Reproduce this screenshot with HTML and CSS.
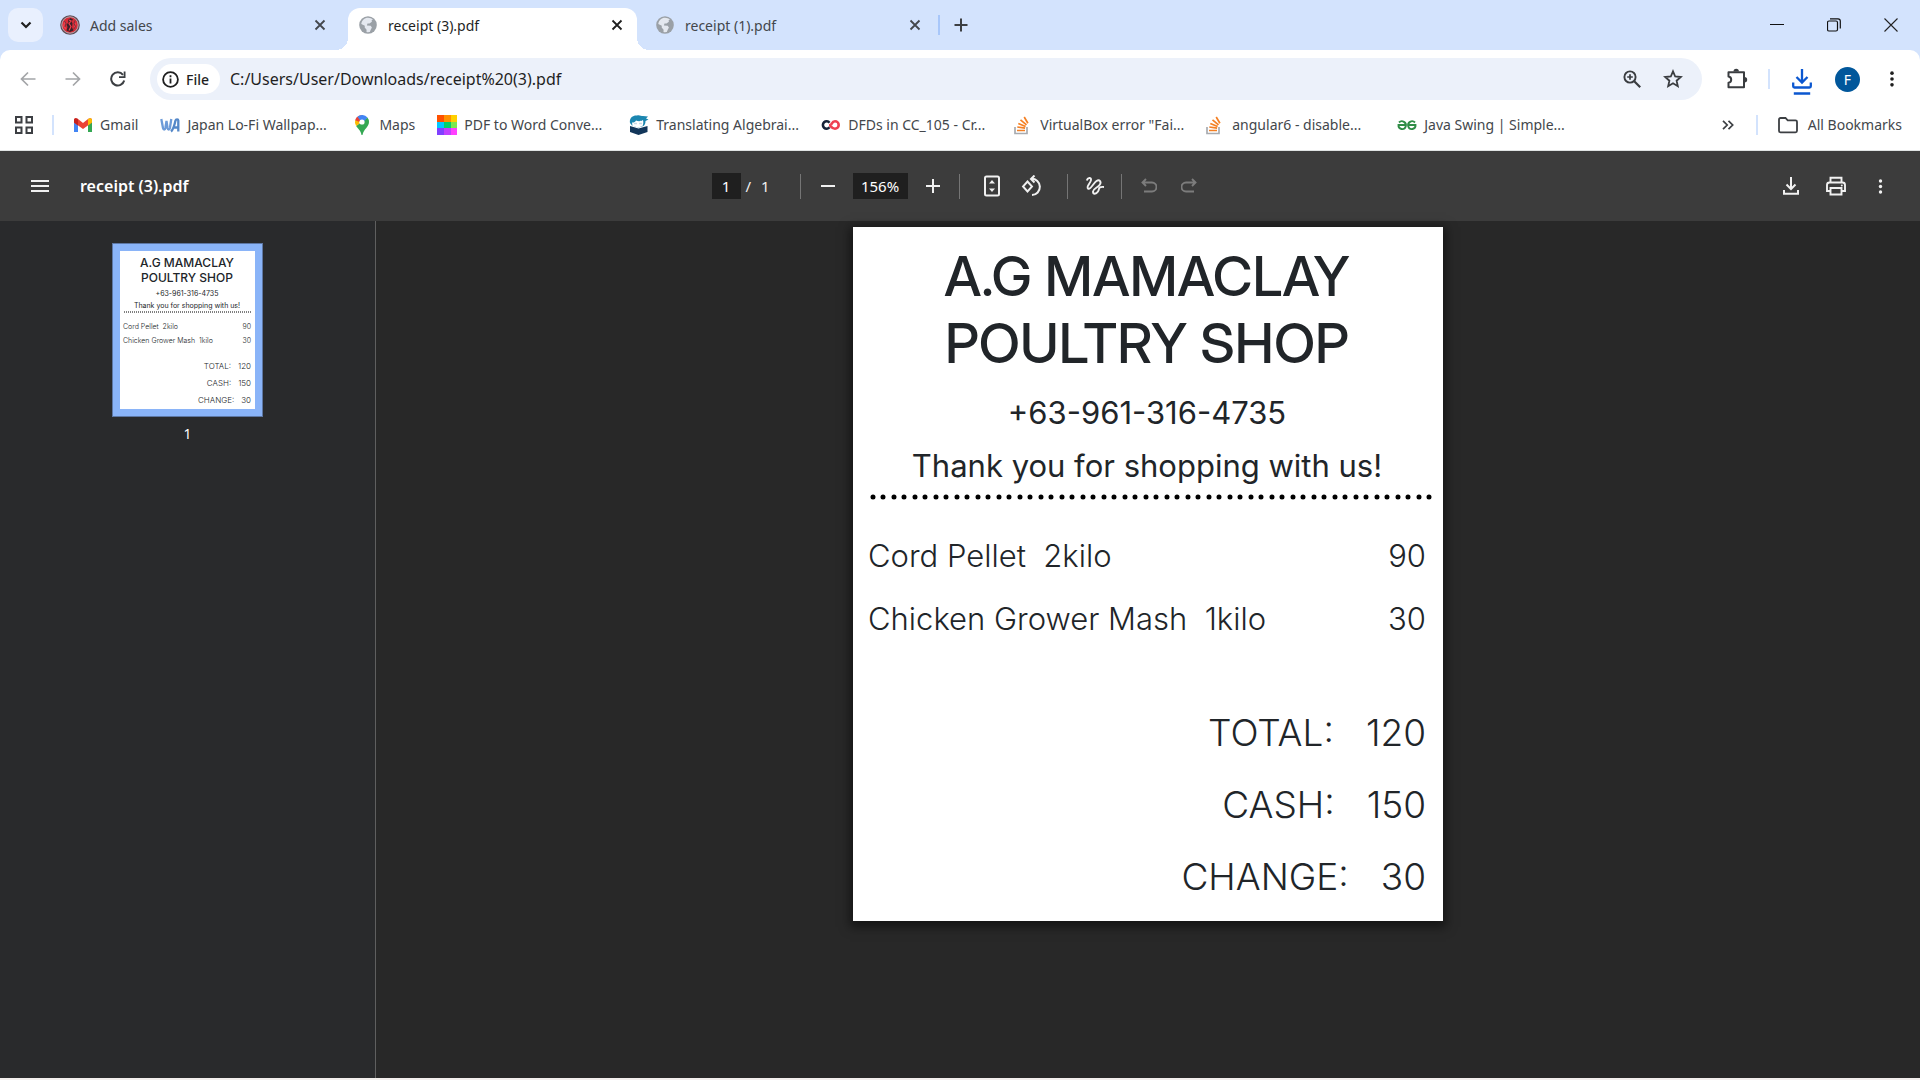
FILE: index.html
```html
<!DOCTYPE html>
<html lang="en">
<head>
<meta charset="utf-8">
<title>receipt (3).pdf</title>
<link rel="stylesheet" href="styles.css">
</head>
<body>
<svg class="defs" aria-hidden="true">
  <symbol id="i-close" viewBox="0 0 12 12"><path d="M1.500 1.500l9 9M10.500 1.500l-9 9" fill="none" stroke="currentColor" stroke-width="1.800"/></symbol>
  <symbol id="i-globe" viewBox="0 0 18 18"><circle cx="9" cy="9" r="8.800" fill="#9aa0a6"/><path d="M9 1.800c2 0 3.600.7 4.900 1.900l-1.300.5.3 1.500-2.400 1.700-2 .2-.6 1.800 3.800.3 1.200 1.900-1.200 2.100-.9 2.300c-.8.200-2.400.300-3.300-.1l.1-2.200-1.900-2.100.1-1.800L2.300 8C2.700 4.500 5.500 1.800 9 1.800z" fill="#e4e8ef"/></symbol>
  <symbol id="i-so" viewBox="0 0 20 20"><path d="M2 12v6.500h12V12" fill="none" stroke="#a8abb0" stroke-width="1.700"/><path d="M4 15.500h8M4.300 12l7.800 1.200M5.300 8.500l7.300 3M7.500 4.800l6 5M11.200 2l3.700 6.300" fill="none" stroke="#f48024" stroke-width="1.700"/></symbol>
  <symbol id="i-dots" viewBox="0 0 20 20"><g fill="currentColor"><circle cx="10" cy="3.500" r="2"/><circle cx="10" cy="10" r="2"/><circle cx="10" cy="16.500" r="2"/></g></symbol>
</svg>

<header class="browser">
  <div class="tabstrip">
    <button class="tab-search" aria-label="Search tabs"><svg width="12" height="8" viewBox="0 0 12 8"><path d="M1.500 1.500L6 6l4.500-4.500" fill="none" stroke="#1f1f1f" stroke-width="2.200"/></svg></button>
    <div class="tab tab-first">
      <svg class="fav" viewBox="0 0 20 20"><circle cx="10" cy="10" r="9.800" fill="#5c4a54"/><circle cx="10" cy="10" r="8.200" fill="#d92a36" stroke="#b9a8ad" stroke-width="1"/><path d="M10.500 3l2.500 1.500-1.500 2 1 2-.5 4 1.500 3-3.500 1.500-3.500-1.500 1-3.500-1-2.500 2-2-.5-2.500z" fill="#3b2028"/><path d="M9 5l2 1-2 2.500 2 3-2 4M5 7l-1.500 4L6 14M15.500 8l-1 5" fill="none" stroke="#f0404a" stroke-width="1.200"/><path d="M4.500 6L6 8.500 5 12M15 5.500l-1 3 1.500 3-2 3" fill="none" stroke="#6a3a42" stroke-width="1"/></svg>
      <span class="tab-title">Add sales</span>
      <button class="tab-close" aria-label="Close Add sales"><svg width="12" height="12"><use href="#i-close"/></svg></button>
    </div>
    <div class="tab tab-active">
      <svg class="fav"><use href="#i-globe"/></svg>
      <span class="tab-title">receipt (3).pdf</span>
      <button class="tab-close" aria-label="Close receipt (3).pdf"><svg width="12" height="12"><use href="#i-close"/></svg></button>
    </div>
    <div class="tab tab-last">
      <svg class="fav"><use href="#i-globe"/></svg>
      <span class="tab-title">receipt (1).pdf</span>
      <button class="tab-close" aria-label="Close receipt (1).pdf"><svg width="12" height="12"><use href="#i-close"/></svg></button>
    </div>
    <span class="tab-sep"></span>
    <button class="new-tab" aria-label="New tab"><svg width="14" height="14" viewBox="0 0 14 14"><path d="M7 .5v13M.5 7h13" stroke="#3c3f43" stroke-width="2"/></svg></button>
    <div class="window-controls">
      <button aria-label="Minimize"><svg width="14" height="14" viewBox="0 0 14 14"><path d="M0 6.500h14" stroke="#111"/></svg></button>
      <button aria-label="Restore"><svg width="14" height="14" viewBox="0 0 14 14"><path d="M.5 4.500a1.500 1.500 0 011.500-1.500h7a1.500 1.500 0 011.500 1.500v7A1.500 1.500 0 019 13H2A1.500 1.500 0 01.5 11.500zM3 .8h8A2.300 2.300 0 0113.300 3v7.500" fill="none" stroke="#111" stroke-width="1.200"/></svg></button>
      <button aria-label="Close window"><svg width="14" height="14" viewBox="0 0 14 14"><path d="M.5.5l13 13M13.500.5l-13 13" stroke="#222" stroke-width="1.100"/></svg></button>
    </div>
  </div>

  <div class="navbar">
    <button class="nav-btn dim" aria-label="Back"><svg width="16" height="16" viewBox="0 0 16 16"><path d="M15.500 8H2M8 1.500L1.500 8 8 14.500" fill="none" stroke="currentColor" stroke-width="1.700"/></svg></button>
    <button class="nav-btn dim" aria-label="Forward"><svg width="16" height="16" viewBox="0 0 16 16"><path d="M.5 8H14M8 1.500L14.500 8 8 14.500" fill="none" stroke="currentColor" stroke-width="1.700"/></svg></button>
    <button class="nav-btn" aria-label="Reload"><svg width="16" height="16" viewBox="0 0 16 16"><path d="M14.200 9.500A6.600 6.600 0 1113 3.800" fill="none" stroke="currentColor" stroke-width="2"/><path d="M15.500.500v6.500H9V5.200h4.700V.5z" fill="currentColor"/></svg></button>
    <div class="omnibox">
      <button class="file-chip"><svg width="17" height="17" viewBox="0 0 17 17"><circle cx="8.500" cy="8.500" r="7.400" fill="none" stroke="#1f1f1f" stroke-width="1.800"/><path d="M8.500 7.500v5M8.500 4.200v2" stroke="#1f1f1f" stroke-width="1.800"/></svg>File</button>
      <input class="address" type="text" aria-label="Address" value="C:/Users/User/Downloads/receipt%20(3).pdf">
      <button class="omni-btn" aria-label="Zoom"><svg width="18" height="18" viewBox="0 0 18 18"><circle cx="7" cy="7" r="5.600" fill="none" stroke="#3a3d40" stroke-width="1.900"/><path d="M11.200 11.200l6 6" stroke="#3a3d40" stroke-width="2.200"/><path d="M7 4.200v5.600M4.200 7h5.600" stroke="#3a3d40" stroke-width="1.700"/></svg></button>
      <button class="omni-btn" aria-label="Bookmark this page"><svg width="20" height="20" viewBox="0 0 20 20"><path d="M10 2.300l2.200 5.200 5.600.5-4.200 3.700 1.200 5.500L10 14.300l-4.800 2.900 1.200-5.500L2.200 8l5.600-.5z" fill="none" stroke="#3a3d40" stroke-width="1.800"/></svg></button>
    </div>
    <button class="tool-btn extensions" aria-label="Extensions"><svg width="22" height="22" viewBox="0 0 22 22"><path d="M2.500 4.200h15.500v15h-15.500v-4.400c3.600-.4 3.600-5.600 0-6.200z" fill="none" stroke="#3a3d40" stroke-width="2" stroke-linejoin="round"/><path d="M7.500 3.500a2.700 2.700 0 015.400 0zM18.500 9a2.700 2.700 0 010 5.400z" fill="#3a3d40"/></svg></button>
    <span class="rule"></span>
    <button class="tool-btn downloads" aria-label="Downloads"><svg width="20" height="26" viewBox="0 0 20 26"><path d="M10 0v13M4.500 8l5.500 5.500L15.500 8M1.200 13.500v3.700a1.300 1.300 0 001.300 1.300h15a1.300 1.300 0 001.300-1.300v-3.700M1.800 24.500h16.400" fill="none" stroke="#0b57d0" stroke-width="2.300"/></svg></button>
    <button class="avatar" aria-label="Profile">F</button>
    <button class="tool-btn menu" aria-label="Chrome menu"><svg width="18" height="18"><use href="#i-dots"/></svg></button>
  </div>

  <nav class="bookmarks">
    <button class="apps" aria-label="Apps"><svg width="18" height="18" viewBox="0 0 18 18"><path d="M1 1h5.500v5.500H1zM11.500 1H17v5.500h-5.500zM1 11.500h5.500V17H1zM11.500 11.500H17V17h-5.500z" fill="none" stroke="#3c3f43" stroke-width="2"/></svg></button>
    <span class="rule"></span>
    <div class="marks">
      <a href="#"><svg viewBox="0 0 20 20"><path d="M1 17V5h4v12z" fill="#4285f4"/><path d="M15 17V5h4v12z" fill="#34a853"/><path d="M1 4.500C1.500 3 3.500 2.800 5 4l5 4 5-4c1.500-1.200 3.500-1 4 .5v3l-9 6.500-9-6.500z" fill="#ea4335"/><path d="M15 4c1.500-1.200 3.500-1 4 .5V7.500l-4 3z" fill="#fbbc04"/><path d="M1 4.500C1.500 3 3.500 2.800 5 4v6.500l-4-3z" fill="#c5221f"/></svg>Gmail</a>
      <a class="long" href="#"><svg viewBox="0 0 20 20"><path d="M1.300 4l1.700 9c.4 2 2 2 2.400 0L6.500 6l1 7c.4 2 2 2 2.400 0L11.300 4" fill="none" stroke="#6d9bd8" stroke-width="2.300"/><path d="M11 16.500C13 15 14.500 10 15.500 5.500c.4-1.500 2.800-1.500 2.800 0v11M14 12.500h4" fill="none" stroke="#5588c8" stroke-width="2.300"/></svg>Japan Lo-Fi Wallpap...</a>
      <a href="#"><svg viewBox="0 0 20 20"><path d="M15.400 2.500A7 7 0 0117 7c0 5-5.500 7-6.500 13h-1C9 16 6 14 4.100 11.100z" fill="#34a853"/><path d="M3.300 5L7.700 5 7.500 8.500 4.100 11.100A7 7 0 013.300 5z" fill="#fbbc04"/><path d="M10 0a7 7 0 00-5.400 2.500A7 7 0 003.200 5.200L7.500 7 9 4z" fill="#ea4335"/><path d="M5.500 1.700A7 7 0 0115.400 2.500L12 6.500 7.800 5z" fill="#4285f4"/><circle cx="10" cy="7" r="2.600" fill="#fff"/></svg>Maps</a>
      <a class="long" href="#"><svg viewBox="0 0 20 20"><path d="M0 0h7v7H0z" fill="#ff5000"/><path d="M7 0h7v7H7z" fill="#ff9100"/><path d="M14 0h6v7h-6z" fill="#ffd000"/><path d="M0 7h7v6H0z" fill="#00c8ff"/><path d="M7 7h7v6H7z" fill="#00d26a"/><path d="M14 7h6v6h-6z" fill="#7de850"/><path d="M0 13h7v7H0z" fill="#8040ff"/><path d="M7 13h7v7H7z" fill="#c040ff"/><path d="M14 13h6v7h-6z" fill="#ff40ff"/></svg>PDF to Word Conve...</a>
      <a class="long" href="#"><svg viewBox="0 0 20 20"><path d="M1 11l8.500 2.500L18.500 11v6l-9 3-8.500-3z" fill="#12365a"/><path d="M1 8C0 3 4 0 8 .5c2-1 4 .5 6 .5l5 .5-2 2 2.500 1-3 1.500c0 3-1 4-2 5l-5 1.500L3 10.500z" fill="#1b86b0"/><path d="M3 7.500c2 .2 3-.5 4-2 2 1 5 1 7-.5.5 2 .5 4-.5 6L9.500 12.500 3.500 11z" fill="#fff"/><path d="M5 7.800h3v1.500H5zM10 7.800h3v1.500h-3z" fill="#c9dbe6"/></svg>Translating Algebrai...</a>
      <a class="long" href="#"><svg viewBox="0 0 20 20"><path d="M8.500 7.700a3.700 3.700 0 100 4.600" fill="none" stroke="#172238" stroke-width="2.600"/><path d="M8 10c1.500 0 2.500 3.700 6 3.700a3.700 3.700 0 100-7.400c-2.500 0-3 2-4 3.500" fill="none" stroke="#ef4050" stroke-width="2.600"/></svg>DFDs in CC_105 - Cr...</a>
      <a class="long" href="#"><svg><use href="#i-so"/></svg>VirtualBox error "Fai...</a>
      <a class="long" href="#"><svg><use href="#i-so"/></svg>angular6 - disable...</a>
      <a class="long" href="#"><svg viewBox="0 0 20 20"><path d="M9 10H1.500a3.700 3.700 0 007.200 1.500A4 4 0 002 7.500M11 10h7.500a3.700 3.700 0 01-7.200 1.500A4 4 0 0118 7.500" fill="none" stroke="#2f8d46" stroke-width="1.900"/></svg>Java Swing | Simple...</a>
    </div>
    <button class="more" aria-label="More bookmarks"><svg width="12" height="10" viewBox="0 0 12 10"><path d="M1 .8L5.200 5 1 9.200M6.500.8L10.700 5 6.500 9.200" fill="none" stroke="#3c3f43" stroke-width="1.700"/></svg></button>
    <span class="rule"></span>
    <a class="all" href="#"><svg viewBox="0 0 20 20"><path d="M1 4.500a1.500 1.500 0 011.500-1.500h5l2.200 2.300h7.800A1.500 1.500 0 0119 6.800v9a1.500 1.500 0 01-1.500 1.500h-15A1.500 1.500 0 011 15.800z" fill="none" stroke="#3c3f43" stroke-width="1.800"/></svg>All Bookmarks</a>
  </nav>
</header>

<div class="pdfbar">
  <div class="pdf-left">
    <button aria-label="Menu"><svg width="20" height="14" viewBox="0 0 20 14"><path d="M1 2h18M1 7h18M1 12h18" stroke="#f1f1f1" stroke-width="2"/></svg></button>
    <h1 class="pdf-name">receipt (3).pdf</h1>
  </div>
  <div class="pdf-center">
    <input class="page-no" type="text" aria-label="Page number" value="1"><span class="page-count"><span>/</span><span>1</span></span>
    <span class="vr"></span>
    <button aria-label="Zoom out"><svg width="14" height="14" viewBox="0 0 14 14"><path d="M0 7h14" stroke="currentColor" stroke-width="2"/></svg></button>
    <input class="zoom" type="text" aria-label="Zoom level" value="156%">
    <button aria-label="Zoom in"><svg width="14" height="14" viewBox="0 0 14 14"><path d="M0 7h14M7 0v14" stroke="currentColor" stroke-width="2"/></svg></button>
    <span class="vr"></span>
    <button class="fit" aria-label="Fit to page"><svg width="16" height="22" viewBox="0 0 16 22"><rect x="1" y="1.500" width="14" height="19" rx="1.500" fill="none" stroke="currentColor" stroke-width="2"/><path d="M8 5l3 3.500H5zM8 17l3-3.500H5z" fill="currentColor"/></svg></button>
    <button class="rotate" aria-label="Rotate"><svg width="22" height="22" viewBox="0 0 22 22"><path d="M6.500 6.500L11 11.500 6.500 16.500 2 11.500z" fill="none" stroke="currentColor" stroke-width="1.900"/><path d="M10.500 3.800a8 8 0 11.500 16.200" fill="none" stroke="currentColor" stroke-width="2"/><path d="M13.500.500L10 4l3.500 3.500" fill="none" stroke="currentColor" stroke-width="2"/></svg></button>
    <span class="vr"></span>
    <button aria-label="Draw"><svg width="20" height="20" viewBox="0 0 20 20"><path d="M1.800 4.500C2.500 1.500 6.500 1 6 4.200S1 10.500 3 12.500 8.500 7 11.500 5s5.500.8 3 4-6.500 3.500-6.500 6.500 3 3 5 0-.5-5 6-4.500" fill="none" stroke="currentColor" stroke-width="1.900"/></svg></button>
    <span class="vr"></span>
    <button class="off" aria-label="Undo"><svg width="16" height="16" viewBox="0 0 16 16"><path d="M5 1L1.500 4.500 5 8M1.500 4.500H11a4.500 4.500 0 010 9H3" fill="none" stroke="currentColor" stroke-width="1.900"/></svg></button>
    <button class="off" aria-label="Redo"><svg width="16" height="16" viewBox="0 0 16 16"><path d="M11 1l3.500 3.500L11 8M14.500 4.500H5a4.500 4.500 0 000 9h8" fill="none" stroke="currentColor" stroke-width="1.900"/></svg></button>
  </div>
  <div class="pdf-right">
    <button aria-label="Download"><svg width="16" height="18" viewBox="0 0 16 18"><path d="M8 0v11.500M3.500 7.500L8 12l4.500-4.500M1 13v3.800h14V13" fill="none" stroke="currentColor" stroke-width="2"/></svg></button>
    <button aria-label="Print"><svg width="22" height="20" viewBox="0 0 22 20"><path d="M5.500 6V1.800h11V6M5.500 15H2V9a2.500 2.500 0 012.500-2.500h13A2.500 2.500 0 0120 9v6h-3.500M5.500 12h11v6.500h-11z" fill="none" stroke="currentColor" stroke-width="1.900"/><circle cx="16.800" cy="9.500" r="1" fill="currentColor"/></svg></button>
    <button aria-label="More actions"><svg width="17" height="17"><use href="#i-dots"/></svg></button>
  </div>
</div>

<main class="viewer">
  <aside class="sidebar">
    <a class="thumb" href="#page">
      <span class="receipt mini">
        <span class="shop">A.G MAMACLAY<br>POULTRY SHOP</span>
        <span class="line">+63-961-316-4735</span>
        <span class="line">Thank you for shopping with us!</span>
        <svg class="dots"><line x1="1" y1="1" x2="100%" y2="1"/></svg>
        <span class="row"><span>Cord Pellet&nbsp; 2kilo</span><span>90</span></span>
        <span class="row"><span>Chicken Grower Mash&nbsp; 1kilo</span><span>30</span></span>
        <span class="sum first-sum"><span>TOTAL:</span><span>120</span></span>
        <span class="sum"><span>CASH:</span><span>150</span></span>
        <span class="sum"><span>CHANGE:</span><span>30</span></span>
      </span>
    </a>
    <span class="thumb-no">1</span>
  </aside>
  <section class="canvas">
    <article class="receipt page" id="page">
      <h2 class="shop">A.G MAMACLAY<br>POULTRY SHOP</h2>
      <p class="line">+63-961-316-4735</p>
      <p class="line">Thank you for shopping with us!</p>
      <svg class="dots"><line x1="5" y1="3" x2="100%" y2="3"/></svg>
      <div class="row"><span>Cord Pellet&nbsp; 2kilo</span><span>90</span></div>
      <div class="row"><span>Chicken Grower Mash&nbsp; 1kilo</span><span>30</span></div>
      <div class="sum first-sum"><span>TOTAL:</span><span>120</span></div>
      <div class="sum"><span>CASH:</span><span>150</span></div>
      <div class="sum"><span>CHANGE:</span><span>30</span></div>
    </article>
  </section>
</main>
</body>
</html>
```
FILE: styles.css
```css
* { box-sizing: border-box; }

body {
  margin: 0;
  min-height: 100vh;
  display: flex;
  flex-direction: column;
  border-bottom: 2px solid #f3efed;
  font-family: "Noto Sans", "Open Sans", sans-serif;
  font-size: 14px;
  color: #1f1f1f;
}

button, input {
  border: 0;
  padding: 0;
  background: none;
  font: inherit;
  color: inherit;
}

button {
  display: flex;
  align-items: center;
  justify-content: center;
  flex: none;
}

a { color: inherit; text-decoration: none; }
svg { display: block; flex: none; }
.defs { position: absolute; width: 0; height: 0; }

/* Tab strip */
.browser {
  background: linear-gradient(#d3e3fd 70px, #fff 70px);
  border-bottom: 1px solid #dfe3e3;
}
.tabstrip {
  display: flex;
  align-items: center;
  height: 50px;
  padding-left: 8px;
}
.tab-search {
  width: 35px;
  height: 34px;
  border-radius: 10px;
  background: #e9f0fe;
}
.tab {
  display: flex;
  align-items: center;
  gap: 10px;
  width: 289px;
  height: 42px;
  margin-top: 8px;
  padding: 0 14px 8px 18px;
  color: #43474c;
}
.fav { width: 20px; height: 18px; }
.tab-first { width: 305px; padding: 0 22px 8px 17px; }
.tab-first .fav { height: 20px; }
.tab-last { padding-right: 5px; }
.tab-title { flex: 1; }
.tab-close { width: 12px; height: 12px; }
.tab-active {
  position: relative;
  padding-left: 10px;
  border-radius: 12px 12px 0 0;
  background: #fff;
  color: #1f1f1f;
}
.tab-active::before, .tab-active::after {
  content: "";
  position: absolute;
  bottom: 0;
  width: 12px;
  height: 12px;
}
.tab-active::before { left: -12px; background: radial-gradient(circle at 0 0, transparent 12px, #fff 12px); }
.tab-active::after { right: -12px; background: radial-gradient(circle at 100% 0, transparent 12px, #fff 12px); }
.tab-sep { width: 2px; height: 20px; margin-left: 12px; background: #a8c7fa; }
.new-tab { width: 42px; height: 34px; }
.window-controls { display: flex; margin-left: auto; padding-right: 1px; }
.window-controls button { width: 57px; height: 48px; }

/* Address row */
.navbar {
  display: flex;
  align-items: center;
  height: 58px;
  padding: 0 16px 0 8px;
  border-radius: 10px 10px 0 0;
  background: #fff;
}
.nav-btn { width: 40px; height: 40px; margin-right: 5px; color: #3c3f43; }
.nav-btn.dim { color: #a3a5a8; }
.omnibox {
  display: flex;
  align-items: center;
  flex: 1;
  height: 42px;
  margin: 0 10px 0 7px;
  padding: 0 19px 0 7px;
  border-radius: 21px;
  background: #ecf1fa;
}
.file-chip {
  justify-content: flex-start;
  gap: 7px;
  width: 63px;
  height: 30px;
  padding-left: 5px;
  border-radius: 15px;
  background: #fff;
  font-weight: 500;
}
.address { flex: 1; min-width: 0; padding-left: 10px; font-size: 16px; }
.omni-btn { width: 20px; margin-left: 21px; }
.tool-btn { width: 50px; height: 40px; }
.extensions { margin-right: 6px; }
.downloads { padding-top: 6px; }
.rule { width: 2px; height: 20px; background: #d3e3fd; }
.navbar .rule { margin-right: 7px; }
.avatar {
  width: 25px;
  height: 25px;
  margin: 0 6px 0 8px;
  border-radius: 50%;
  background: #01579b;
  color: #fff;
  font-size: 14px;
}
.tool-btn.menu { width: 24px; margin-left: 14px; }

/* Bookmarks */
.bookmarks {
  display: flex;
  align-items: center;
  height: 42px;
  padding: 0 18px 9px 15px;
  color: #43474c;
}
.apps { margin-right: 19px; }
.marks {
  display: flex;
  flex: 1;
  gap: 22px;
  padding-left: 19px;
  white-space: nowrap;
}
.marks a, .all { display: flex; align-items: center; gap: 7px; }
.marks .long { width: 170px; }
.marks svg, .all svg { width: 20px; height: 20px; }
.more { margin-right: 22px; }
.all { margin-left: 20px; gap: 10px; white-space: nowrap; }

/* Viewer toolbar */
.pdfbar {
  display: grid;
  grid-template-columns: 1fr auto 1fr;
  align-items: center;
  height: 70px;
  background: #3c3c3c;
  color: #f1f1f1;
}
.pdf-left { display: flex; align-items: center; gap: 30px; padding-left: 30px; }
.pdf-name { margin: 0; font-size: 16px; font-weight: 600; color: #fff; }
.pdf-center { display: flex; align-items: center; font-size: 15px; }
.pdf-center button { width: 40px; height: 32px; }
.pdf-center input {
  height: 26px;
  background: #1f1f1f;
  color: #fff;
  text-align: center;
}
.pdf-center .page-no { width: 29px; }
.page-count { display: flex; gap: 10px; width: 53px; padding-left: 5px; }
.pdf-center .zoom { width: 55px; margin: 0 5px; }
.vr { width: 1px; height: 25px; margin: 0 7px 0 6px; background: #757575; }
.vr + .fit { margin-left: 5px; }
.rotate { margin-right: 9px; }
.pdf-center .off { color: #7c7c7c; }
.pdf-right { display: flex; justify-content: flex-end; padding-right: 17px; }
.pdf-right button { width: 45px; height: 32px; }

/* Document area */
.viewer { display: flex; flex: 1; background: #282828; }
.sidebar {
  display: flex;
  flex-direction: column;
  align-items: center;
  width: 376px;
  padding-top: 22px;
  border-right: 1px solid #5f5f5f;
  background: #292a2c;
}
.thumb { border: 1px solid #5d77a4; padding: 7px; background: #8ab4f8; }
.thumb-no { margin-top: 7px; color: #fff; }
.canvas {
  display: flex;
  flex: 1;
  align-items: flex-start;
  justify-content: center;
  padding: 6px 0 24px;
}

/* Receipt, shared by the page and its thumbnail */
.receipt {
  display: block;
  background: #fff;
  color: #212529;
  font-family: Inter, sans-serif;
  font-weight: 300;
}
.receipt .shop, .receipt .line { display: block; margin: 0; text-align: center; }
.receipt .shop { font-weight: 500; }
.receipt .line { font-weight: 400; }
.row { display: flex; justify-content: space-between; }
.sum { display: flex; justify-content: flex-end; }
.dots { width: 100%; overflow: visible; }
.dots line { stroke: #000; stroke-linecap: round; }

.page {
  width: 590px;
  padding: 16px 17px 20px 15px;
  box-shadow: 0 3px 10px 3px rgba(0, 0, 0, .5);
  font-size: 31px;
}
.page .shop { font-family: "Inter Display", Inter, sans-serif; font-size: 55px; line-height: 67px; }
.page .line { margin-top: 12px; line-height: 41px; }
.page .shop + .line { margin-top: 15px; }
.page .dots { width: calc(100% + 4px); height: 6px; margin-top: 8px; }
.page .dots line { stroke-width: 5px; stroke-dasharray: 0 10 0 11; }
.page .row { margin-top: 24px; line-height: 39px; }
.page .dots + .row { margin-top: 36px; }
.page .sum { gap: 32px; margin-top: 24px; font-size: 37px; line-height: 48px; }
.page .first-sum { margin-top: 71px; }

.mini { width: 135px; height: 158px; padding: 4px 4px 4px 3px; font-size: 7px; }
.mini .shop { font-size: 12px; line-height: 15px; }
.mini .line { margin-top: 3px; line-height: 9px; }
.mini .shop + .line { margin-top: 4px; }
.mini .dots { height: 2px; margin-top: 1px; }
.mini .dots line { stroke-width: 1px; stroke-dasharray: 1 1; stroke-linecap: butt; }
.mini .row { margin-top: 5px; line-height: 9px; }
.mini .dots + .row { margin-top: 9px; }
.mini .sum { gap: 7px; margin-top: 5px; font-size: 8px; line-height: 12px; }
.mini .first-sum { margin-top: 15px; }
```
